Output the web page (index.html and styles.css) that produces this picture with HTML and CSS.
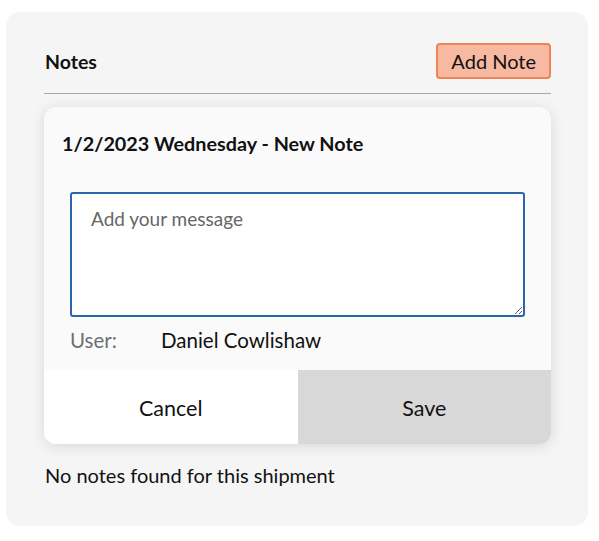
FILE: index.html
```html
<!DOCTYPE html>
<html>
<head>
<meta charset="utf-8">
<link rel="stylesheet" href="styles.css">
</head>
<body>
<section class="panel">
  <header class="panel-head">
    <h2 class="panel-title">Notes</h2>
    <button class="add-btn">Add Note</button>
  </header>
  <div class="note-card">
    <div class="note-body">
      <h3 class="note-title">1/2/2023 Wednesday - New Note</h3>
      <textarea class="note-input" placeholder="Add your message"></textarea>
      <div class="user-row">
        <span class="user-label">User:</span>
        <span class="user-name">Daniel Cowlishaw</span>
      </div>
    </div>
    <div class="note-actions">
      <button class="act cancel">Cancel</button>
      <button class="act save">Save</button>
    </div>
  </div>
  <p class="empty">No notes found for this shipment</p>
</section>
</body>
</html>
```

FILE: styles.css
```css
html, body {
  margin: 0;
  padding: 0;
  background: #ffffff;
}
body {
  font-family: Lato, "Liberation Sans", sans-serif;
  color: #111;
  padding: 12px 11px 15px 6px;
}
.panel {
  background: #f5f5f5;
  border-radius: 14px;
  padding: 31px 37px 0 38px;
  height: 483px;
}
.panel-head {
  display: flex;
  justify-content: space-between;
  align-items: center;
  padding-bottom: 14px;
  border-bottom: 1px solid #a9a9a9;
}
.panel-title {
  margin: 0;
  font-size: 19.5px;
  font-weight: 700;
  padding-left: 1px;
}
.add-btn {
  font-family: inherit;
  font-size: 20px;
  color: #111;
  background: #f8b9a2;
  border: 2px solid #f08456;
  border-radius: 4px;
  height: 36px;
  padding: 0 13px;
}
.note-card {
  margin-top: 13px;
  background: #fafafa;
  border-radius: 12px;
  box-shadow: 0 2px 14px rgba(0,0,0,0.12);
  overflow: hidden;
}
.note-body {
  padding: 25px 26px 19px 26px;
}
.note-title {
  margin: 0 0 0 -8px;
  font-size: 19.8px;
  font-weight: 700;
  line-height: 22px;
}
.note-input {
  display: block;
  box-sizing: border-box;
  width: 100%;
  height: 125px;
  margin-top: 38px;
  border: 2px solid #2b66ad;
  border-radius: 3px;
  background: #fff;
  padding: 13px 19px;
  font-family: inherit;
  font-size: 19px;
  outline: none;
  resize: vertical;
}
.note-input::placeholder {
  color: #666;
}
.user-row {
  display: flex;
  margin-top: 12px;
  font-size: 20.5px;
  line-height: 22px;
}
.user-label {
  width: 91px;
  color: #707070;
}
.user-name {
  color: #111;
}
.note-actions {
  display: flex;
  height: 74px;
}
.act {
  flex: 1;
  border: 0;
  font-family: inherit;
  font-size: 21.5px;
  color: #111;
  padding: 2px 0 0 0;
}
.cancel { background: #ffffff; }
.save { background: #d8d8d8; }
.empty {
  margin: 20px 0 0 1px;
  font-size: 20px;
  line-height: 22px;
}
```
